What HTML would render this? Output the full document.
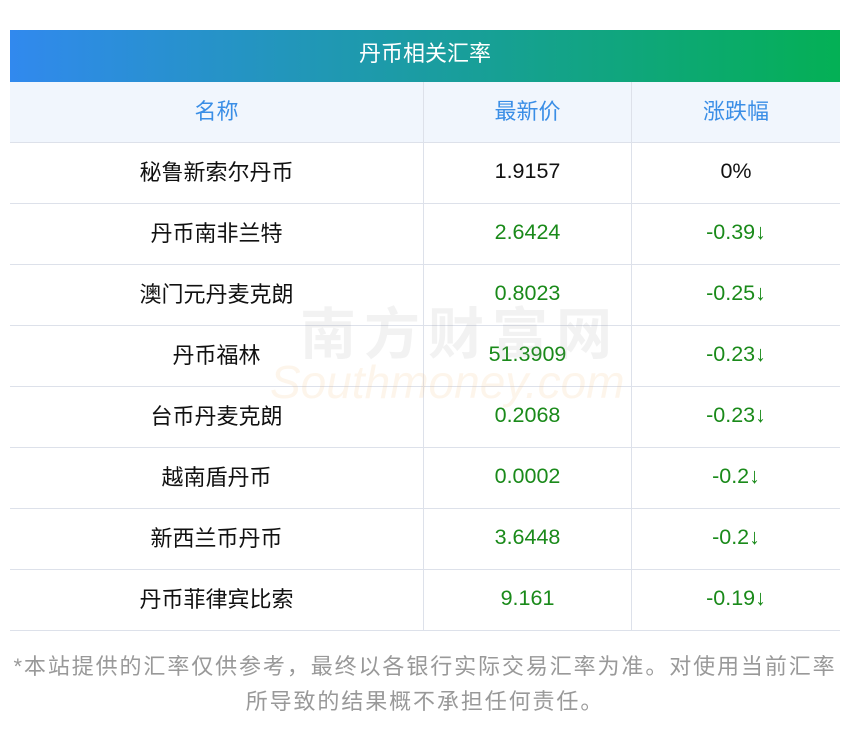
<!DOCTYPE html>
<html><head><meta charset="utf-8"><style>
body{margin:0;width:850px;height:733px;background:#fff;font-family:"Liberation Sans","Noto Sans CJK SC",sans-serif;position:relative;overflow:hidden}
.bar{position:absolute;left:10px;top:30px;width:830px;height:52px;background:linear-gradient(90deg,#3189ee,#04b055);color:#fff;font-size:22px;text-align:center;line-height:48px}
table{position:absolute;left:10px;top:82px;width:830px;border-collapse:collapse;font-size:21.5px}
td{border:1px solid #dde1ea;height:57px;text-align:center;color:#111;padding:0 0 3px 0}
tr td:first-child{border-left:none}tr td:last-child{border-right:none}
tr.h td{background:#f1f6fd;color:#3a8ee6;border-top:none}
td span{position:relative;top:-1px;font-size:22px}
.g{color:#1a8a1a}
.wm{position:absolute;left:300px;top:290px;font-size:56px;color:rgba(150,150,150,.12);font-weight:bold;letter-spacing:8px}
.wm2{position:absolute;left:270px;top:355px;font-size:46px;font-style:italic;color:rgba(240,190,120,.15)}
.note{position:absolute;left:0;top:649px;width:850px;text-align:center;color:#999;font-size:22px;letter-spacing:1.9px;line-height:35px}
</style></head><body>
<div class="bar">丹币相关汇率</div>
<table>
<tr class="h"><td style="width:413px"><span>名称</span></td><td style="width:207px"><span>最新价</span></td><td><span>涨跌幅</span></td></tr>
<tr><td><span>秘鲁新索尔丹币</span></td><td>1.9157</td><td>0%</td></tr>
<tr><td><span>丹币南非兰特</span></td><td class="g">2.6424</td><td class="g">-0.39↓</td></tr>
<tr><td><span>澳门元丹麦克朗</span></td><td class="g">0.8023</td><td class="g">-0.25↓</td></tr>
<tr><td><span>丹币福林</span></td><td class="g">51.3909</td><td class="g">-0.23↓</td></tr>
<tr><td><span>台币丹麦克朗</span></td><td class="g">0.2068</td><td class="g">-0.23↓</td></tr>
<tr><td><span>越南盾丹币</span></td><td class="g">0.0002</td><td class="g">-0.2↓</td></tr>
<tr><td><span>新西兰币丹币</span></td><td class="g">3.6448</td><td class="g">-0.2↓</td></tr>
<tr><td><span>丹币菲律宾比索</span></td><td class="g">9.161</td><td class="g">-0.19↓</td></tr>
</table>
<div class="wm">南方财富网</div>
<div class="wm2">Southmoney.com</div>
<div class="note">*本站提供的汇率仅供参考，最终以各银行实际交易汇率为准。对使用当前汇率<br>所导致的结果概不承担任何责任。</div>
</body></html>
